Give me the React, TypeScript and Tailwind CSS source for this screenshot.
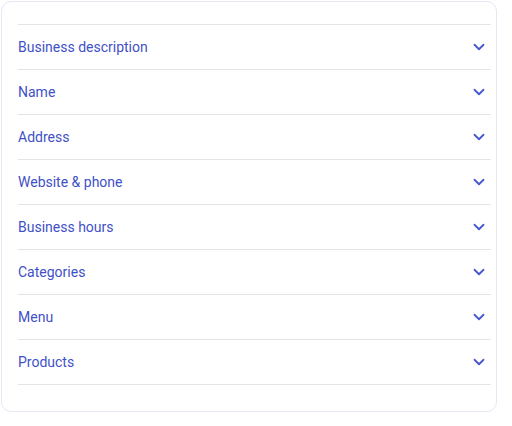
import React from 'react';
import { ChevronDown } from 'lucide-react';

const items = [
  'Business description',
  'Name',
  'Address',
  'Website & phone',
  'Business hours',
  'Categories',
  'Menu',
  'Products',
];

const App: React.FC = () => {
  return (
    <div className="w-[512px] h-[426px] bg-white p-px" style={{ fontFamily: 'Roboto, "Noto Sans", sans-serif' }}>
      <div className="w-[496px] h-[411px] rounded-[10px] border border-[#e6e6f4] pl-[16px] pr-[5px] pt-[22px]">
        <div className="border-t border-[#e3e3e8]">
          {items.map((label) => (
            <div key={label} className="flex items-center justify-between h-[45px] border-b border-[#e3e3e8] pr-[3px]">
              <span className="text-[14px] text-[#3f51c7]">{label}</span>
              <ChevronDown size={18} strokeWidth={2.4} className="text-[#4657d0]" />
            </div>
          ))}
        </div>
      </div>
    </div>
  );
};

export default App;
